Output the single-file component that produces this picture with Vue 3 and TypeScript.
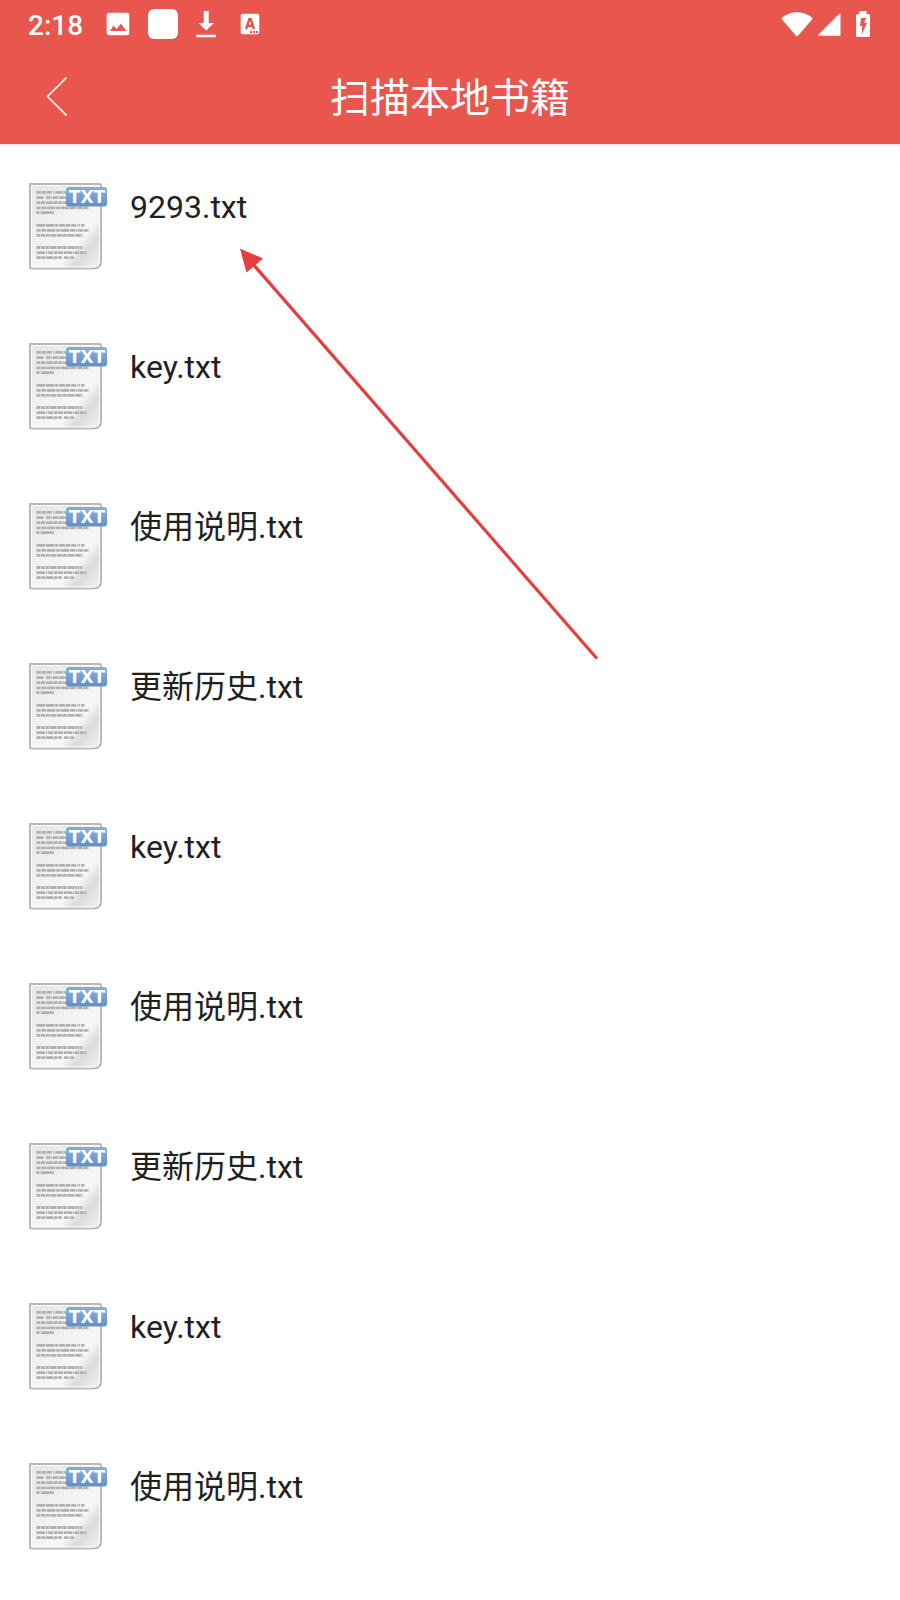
<script setup lang="ts">
interface Book {
  id: number
  name: string
}

interface TextLine {
  y: number
  end: number
  dashes: string
}

const names: string[] = [
  '9293.txt',
  'key.txt',
  '使用说明.txt',
  '更新历史.txt',
  'key.txt',
  '使用说明.txt',
  '更新历史.txt',
  'key.txt',
  '使用说明.txt',
]

const books: Book[] = names.map((name, id) => ({ id, name }))

const lines: TextLine[] = [
  { y: 17.4, end: 50, dashes: '4.6 .7 4.3 .7 5 1.5 1.3 1 7 .7' },
  { y: 22.6, end: 50, dashes: '7 2.5 4 .7 1.4 .9 5.5 .7' },
  { y: 27.7, end: 50, dashes: '3.6 .6 4.6 .7 7 .7 4 .7 4 .7' },
  { y: 32.9, end: 69, dashes: '4.3 .7 4.6 .7 8.8 .7 4 .7 8.5 .7 5.3 .7 1.4 .7 4.6 .7' },
  { y: 37.7, end: 34, dashes: '3.2 1.2 13.200 2' },
  { y: 50.3, end: 65, dashes: '8.8 .7 8.5 .7 3 .7 6.5 .7 4.6 .7 4.6 .9 1.2 .9 1.2 .9 3.5 2' },
  { y: 55.3, end: 69, dashes: '4.3 .7 4.6 .7 8.8 .7 4 .7 8.5 .7 5.3 .7 1.4 .7 4.6 .7' },
  { y: 60.4, end: 62.6, dashes: '4 .7 4 .7 3.6 .7 6.5 .7 4.5 .7 4.2 .7 7 .7 6 .7' },
  { y: 72.5, end: 62.4, dashes: '4 .7 4 .7 3.6 .7 6.5 .7 4.5 .7 4.2 .7 7 .7 2.4 .7 1.4 .7' },
  { y: 77.7, end: 67, dashes: '8.6 .8 1.4 .8 5 .7 3.3 .7 5.3 .7 8.5 .7 1.4 .7 4 .7 4.5 .7 1.2 .7' },
  { y: 82.7, end: 54, dashes: '4.3 .7 4 .7 7 .7 3.4 .7 4 2 4 .7 1.2 .7 3.6 .7' },
]
</script>

<template>
  <div class="screen">
    <svg class="symbols" aria-hidden="true">
      <defs>
        <linearGradient id="paper" x1="0" y1="0" x2="1" y2="1">
          <stop offset="0" stop-color="#e6e6e6" />
          <stop offset=".5" stop-color="#f3f3f3" />
          <stop offset=".68" stop-color="#f7f7f7" />
          <stop offset=".8" stop-color="#dadada" />
          <stop offset=".88" stop-color="#e6e6e6" />
          <stop offset="1" stop-color="#f4f4f4" />
        </linearGradient>
        <linearGradient id="badge" x1="0" y1="0" x2="0" y2="1">
          <stop offset="0" stop-color="#84aee0" />
          <stop offset=".3" stop-color="#7ba6da" />
          <stop offset="1" stop-color="#6290c6" />
        </linearGradient>
        <symbol id="txt-file" viewBox="8 7 80 88">
          <path
            d="M10 9H79.5Q81 9 81 10.500V86Q81 93.500 73.500 93.500H11.500Q10 93.500 10 92Z"
            fill="url(#paper)"
            stroke="#b9b9b9"
            stroke-width="2"
          />
          <path
            d="M11.500 10.500H79.500V85Q79.500 92 73 92H11.500Z"
            fill="none"
            stroke="#fcfcfc"
            stroke-width="1"
          />
          <path
            v-for="line in lines"
            :key="line.y"
            :d="`M16.400 ${line.y}H${line.end}`"
            :stroke-dasharray="line.dashes"
            fill="none"
            stroke="#b2b2b2"
            stroke-width="2.800"
          />
          <rect x="46" y="12" width="41" height="19.500" rx="3" fill="url(#badge)" />
          <text x="67" y="27.500" class="badge-text" text-anchor="middle">TXT</text>
        </symbol>
      </defs>
    </svg>

    <header class="top">
      <div class="status">
        <span class="clock">2:18</span>
        <div class="notices">
          <svg width="24" height="24" viewBox="0 0 24 24" aria-hidden="true">
            <path
              fill="#fff"
              fill-rule="evenodd"
              d="M3 .8H21Q23.300 .8 23.300 3V21Q23.300 23.300 21 23.300H3Q.6 23.300 .6 21V3Q.6 .8 3 .8ZM4 19H20.500L15 11.800L10.500 17L7.500 13.500Z"
            />
          </svg>
          <svg width="30" height="30" viewBox="0 0 30 30" aria-hidden="true">
            <rect width="30" height="30" rx="6" fill="#fff" />
          </svg>
          <svg width="20" height="28" viewBox="0 0 20 28" aria-hidden="true">
            <path fill="#fff" d="M7.700 1H12.700V13H18L10.200 20.500L2.500 13H7.700ZM.3 24.700H20V27.200H.3Z" />
          </svg>
          <svg width="20" height="22" viewBox="0 0 20 22" aria-hidden="true">
            <rect x=".7" y=".7" width="18.600" height="20.600" rx="2" fill="#fff" />
            <path
              d="M6 16L9.300 6.200H10.700L14 16M7.300 12.700H12.700"
              fill="none"
              stroke="#e8564e"
              stroke-width="2.400"
            />
            <path d="M10 19H18" stroke="#e8564e" stroke-width="2" stroke-dasharray="2 1" />
          </svg>
        </div>
        <div class="signals">
          <svg width="32" height="26" viewBox="0 0 32 26" aria-hidden="true">
            <path fill="#fff" d="M.9 6.500Q16 -4 31.200 6.500Q31.700 7.300 31.200 8.200L17 24.700Q16 25.700 15 24.700L.9 8.200Q.4 7.300 .9 6.500Z" />
          </svg>
          <svg width="23" height="23" viewBox="0 0 23 23" aria-hidden="true">
            <path fill="#fff" d="M22.500 1.500V22.800H.3Q-.2 22.300 .3 21.800L20.500 1.500Q22.500 0 22.500 1.500Z" />
          </svg>
          <svg width="14" height="26" viewBox="0 0 14 26" aria-hidden="true">
            <path
              fill="#fff"
              fill-rule="evenodd"
              d="M3.500 0H10.500V3H12.500Q14 3 14 4.500V24.500Q14 26 12.500 26H1.500Q0 26 0 24.500V4.500Q0 3 1.500 3H3.500ZM5 7L4 15H6.200L5.700 23.500L11 12H8L10.300 7Z"
            />
          </svg>
        </div>
      </div>

      <div class="bar">
        <button class="back" type="button" aria-label="返回">
          <svg width="22" height="40" viewBox="0 0 22 40" aria-hidden="true">
            <path d="M21.500 1.500L2.500 20.500L21.500 39.500" fill="none" stroke="#fff" stroke-width="1.600" />
          </svg>
        </button>
        <h1 class="title">扫描本地书籍</h1>
      </div>
    </header>

    <ul class="books">
      <li v-for="book in books" :key="book.id">
        <a class="book" href="#">
          <svg class="file" aria-hidden="true"><use href="#txt-file" /></svg>
          <span class="name">{{ book.name }}</span>
        </a>
      </li>
    </ul>

    <svg class="arrow" width="360" height="414" viewBox="0 0 360 414" aria-hidden="true">
      <path d="M12 15L356 409.500" stroke="#e53e3e" stroke-width="3.200" stroke-linecap="round" />
      <path d="M0 .5L23 10.500L6.500 24.500Z" fill="#e53e3e" />
    </svg>
  </div>
</template>

<style>
body {
  margin: 0;
  background: #fff;
}
</style>

<style scoped>
.screen {
  position: relative;
  min-height: 100vh;
  box-sizing: border-box;
  background: #fff;
  color: #212121;
  font-family: Roboto, "Noto Sans CJK SC", sans-serif;
}

svg {
  display: block;
  flex: none;
}

.symbols {
  position: absolute;
  width: 0;
  height: 0;
}

.badge-text {
  font-family: "DejaVu Sans", sans-serif;
  font-size: 17px;
  font-weight: 700;
  fill: #fff;
}

.top {
  background: #e8564e;
  border-bottom: 2px solid #ebebeb;
  color: #fff;
}

.status {
  display: flex;
  align-items: center;
  height: 48px;
  padding: 0 30px 0 28px;
}

.clock {
  width: 78px;
  padding-top: 4px;
  font-size: 28px;
  font-weight: 500;
  line-height: 44px;
}

.notices {
  display: flex;
  align-items: center;
  gap: 18px;
}

.notices svg:last-child {
  margin-left: 6px;
}

.signals {
  display: flex;
  align-items: center;
  gap: 5px;
  margin-left: auto;
}

.signals svg:last-child {
  margin-left: 10px;
}

.bar {
  display: grid;
  grid-template-columns: 112px 1fr 112px;
  align-items: center;
  height: 96px;
}

.back {
  display: flex;
  align-items: center;
  justify-content: center;
  height: 96px;
  padding: 0;
  border: 0;
  background: none;
  cursor: pointer;
}

.title {
  margin: 0;
  padding-top: 6px;
  font-size: 40px;
  font-weight: 400;
  line-height: 60px;
  text-align: center;
}

.books {
  margin: 0;
  padding: 0;
  list-style: none;
}

.book {
  display: flex;
  gap: 22px;
  padding: 36px 28px;
  color: inherit;
  text-decoration: none;
}

.file {
  width: 80px;
  height: 88px;
}

.name {
  font-size: 32px;
  line-height: 50px;
}

.arrow {
  position: absolute;
  top: 248px;
  left: 240px;
  pointer-events: none;
}
</style>
